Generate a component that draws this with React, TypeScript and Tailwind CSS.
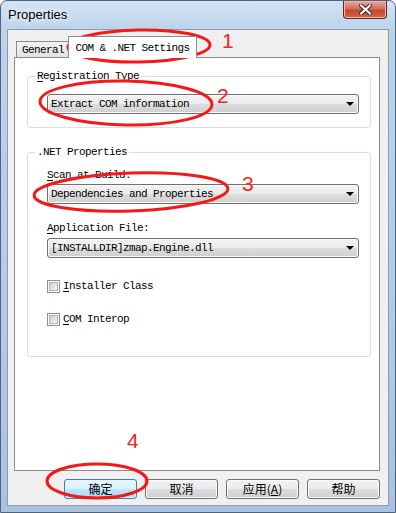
import React from 'react';

const mono = "font-['Liberation_Mono','Noto_Sans_CJK_SC',monospace] text-[11px] tracking-[-0.6px] leading-[14px] text-black";

function Dropdown({ text }: { text: string }) {
  return (
    <div className="flex h-[20px] w-[312px] items-center rounded-[3px] border border-[#707070] bg-[linear-gradient(#f2f2f2,#ebebeb_50%,#dddddd_50%,#cfcfcf)] pl-[3px] pr-[4px] shadow-[inset_0_0_0_1px_#fbfbfb]">
      <span className={`flex-1 whitespace-pre ${mono}`}>{text}</span>
      <span className="h-0 w-0 border-x-[4px] border-t-[4px] border-x-transparent border-t-black" />
    </div>
  );
}

function Check({ first, rest }: { first: string; rest: string }) {
  return (
    <div className="flex items-center gap-[3px]">
      <span className="flex h-[13px] w-[13px] items-center justify-center border border-[#8e8f8f] bg-white">
        <span className="h-[9px] w-[9px] border border-[#aeb3b9] bg-[linear-gradient(135deg,#cbcfd5,#f7f7f7)]" />
      </span>
      <span className={mono}>
        <span className="underline underline-offset-2">{first}</span>
        {rest}
      </span>
    </div>
  );
}

function Btn({ label, primary }: { label: React.ReactNode; primary?: boolean }) {
  return (
    <button
      className={`flex h-[20px] w-[73px] items-center justify-center rounded-[3px] border font-['Noto_Sans_CJK_SC',sans-serif] text-[12px] leading-none text-black ${
        primary
          ? 'border-[#3c7fb1] bg-[linear-gradient(#eaf6fd,#d9f0fc_50%,#bee6fd_50%,#a7d9f5)] shadow-[inset_0_0_0_1px_#e3f4fc]'
          : 'border-[#707070] bg-[linear-gradient(#f2f2f2,#ebebeb_50%,#dddddd_50%,#cfcfcf)] shadow-[inset_0_0_0_1px_#fbfbfb]'
      }`}
    >
      {label}
    </button>
  );
}

export default function App() {
  return (
    <div className="relative h-[513px] w-[396px] overflow-hidden rounded-t-[7px] border border-[#4f647c] bg-[linear-gradient(180deg,#d3e3f4,#bcd3ec_28px,#b3cbe5_60%,#a9c2de)] px-[6px] pb-[6px]">
      {/* title bar */}
      <div className="flex h-[28px] items-start justify-between">
        <span className="ml-[1px] self-center font-['Liberation_Sans',sans-serif] text-[13px] text-black [text-shadow:0_0_6px_#fff,0_0_10px_#fff]">
          Properties
        </span>
        <div className="mr-[2px] flex h-[18px] w-[44px] items-center justify-center rounded-b-[4px] border border-t-0 border-[#5b2a24] bg-[linear-gradient(#e9a99b,#d56d5c_45%,#c7462f_55%,#d4624a)] shadow-[inset_0_0_0_1px_#f0b7a8]">
          <svg width="13" height="11" viewBox="0 0 13 11">
            <path d="M2 1.5 L11 9.5 M11 1.5 L2 9.5" stroke="#3b2a2a" strokeWidth="4" strokeLinecap="square" />
            <path d="M2 1.5 L11 9.5 M11 1.5 L2 9.5" stroke="#fff" strokeWidth="2" strokeLinecap="square" />
          </svg>
        </div>
      </div>

      {/* client area */}
      <div className="h-[477px] w-[382px] border border-[#8b9bb0] bg-[#f0f0f0] pt-[6px]">
        {/* tabs */}
        <div className="flex items-end pl-[8px]">
          <div className={`relative -mb-px -mr-px flex h-[17px] w-[53px] items-center border border-[#898c95] bg-[linear-gradient(#f2f2f2,#e3e3e3)] pl-[5px] ${mono}`}>
            General
          </div>
          <div className={`relative z-10 -mb-px flex h-[22px] w-[129px] items-center justify-center border border-b-0 border-[#898c95] bg-white ${mono}`}>
            COM &amp; .NET Settings
          </div>
        </div>

        {/* tab page */}
        <div className="ml-[6px] h-[414px] w-[366px] border border-[#898c95] bg-white pl-[12px] pt-[11px]">
          <fieldset className="w-[344px] rounded-[3px] border border-[#d5dfe5] px-0 pb-[13px]">
            <legend className={`ml-[7px] px-[2px] ${mono}`}>
              <span className="underline underline-offset-2">R</span>egistration Type
            </legend>
            <div className="pl-[19px] pt-[11px]">
              <Dropdown text="Extract COM information" />
            </div>
          </fieldset>

          <fieldset className="mt-[17px] w-[344px] rounded-[3px] border border-[#d5dfe5] px-0 pb-[30px]">
            <legend className={`ml-[7px] px-[2px] ${mono}`}>.NET Properties</legend>
            <div className="flex flex-col pl-[19px] pt-[9px]">
              <span className={`mb-[2px] ${mono}`}>
                <span className="underline underline-offset-2">S</span>can at Build:
              </span>
              <Dropdown text="Dependencies and Properties" />
              <span className={`mb-[3px] mt-[17px] ${mono}`}>
                <span className="underline underline-offset-2">A</span>pplication File:
              </span>
              <Dropdown text="[INSTALLDIR]zmap.Engine.dll" />
              <div className="mt-[21px]">
                <Check first="I" rest="nstaller Class" />
              </div>
              <div className="mt-[19px]">
                <Check first="C" rest="OM Interop" />
              </div>
            </div>
          </fieldset>
        </div>

        {/* buttons */}
        <div className="mt-[8px] flex justify-end gap-[8px] pr-[8px]">
          <Btn label="确定" primary />
          <Btn label="取消" />
          <Btn
            label={
              <span>
                应用(<span className="underline">A</span>)
              </span>
            }
          />
          <Btn label="帮助" />
        </div>
      </div>

      {/* red annotations */}
      <svg className="pointer-events-none absolute left-[-1px] top-[-1px]" width="396" height="513" viewBox="0 0 396 513">
        <g fill="none" stroke="#f51818" strokeWidth="3">
          <ellipse cx="139" cy="46" rx="71" ry="16" transform="rotate(-1 139 46)" />
          <ellipse cx="126" cy="103" rx="86" ry="22" transform="rotate(1 126 103)" />
          <ellipse cx="131" cy="192" rx="97" ry="19" transform="rotate(-2 131 192)" />
          <ellipse cx="97" cy="481" rx="50" ry="17" />
        </g>
      </svg>
      <span className="pointer-events-none absolute left-[221px] top-[24px] font-['Liberation_Sans',sans-serif] text-[21px] text-[#ff2020]">1</span>
      <span className="pointer-events-none absolute left-[216px] top-[79px] font-['Liberation_Sans',sans-serif] text-[21px] text-[#ff2020]">2</span>
      <span className="pointer-events-none absolute left-[241px] top-[167px] font-['Liberation_Sans',sans-serif] text-[21px] text-[#ff2020]">3</span>
      <span className="pointer-events-none absolute left-[126px] top-[424px] font-['Liberation_Sans',sans-serif] text-[21px] text-[#ff2020]">4</span>
    </div>
  );
}
